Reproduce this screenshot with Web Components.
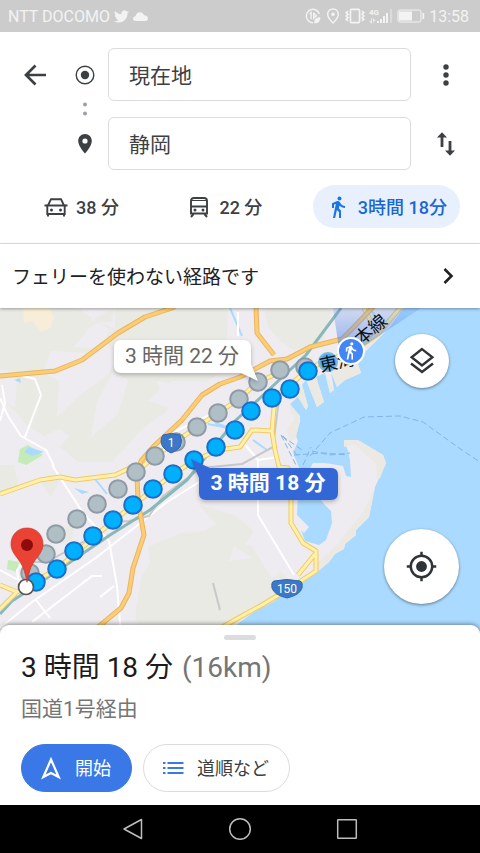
<!DOCTYPE html>
<html lang="ja">
<head>
<meta charset="utf-8">
<meta name="viewport" content="width=device-width, initial-scale=1">
<title>経路</title>
<style>
  body {
    margin: 0;
    font-family: Roboto, "Noto Sans CJK JP", sans-serif;
    color: #3c4043;
    background: #fff;
  }
</style>
</head>
<body>
<route-app></route-app>

<script>
const icons = {
  back: `<path d="M23 12H3M12.500 2.500 3 12l9.500 9.500" fill="none" stroke="currentColor" stroke-width="2.700"/>`,
  origin: `<circle cx="12" cy="12" r="8.800" fill="none" stroke="currentColor" stroke-width="1.400"/><circle cx="12" cy="12" r="4.200"/>`,
  dots: `<circle cx="12" cy="7.500" r="2"/><circle cx="12" cy="16.500" r="2"/>`,
  place: `<path fill-rule="evenodd" d="M12 2C8.100 2 5.200 5.100 5.200 9c0 5.200 6.800 12.500 6.800 12.500S18.800 14.200 18.800 9c0-3.900-2.900-7-6.800-7zm0 4.400a2.600 2.600 0 1 1 0 5.200 2.600 2.600 0 0 1 0-5.200z"/>`,
  more: `<circle cx="12" cy="4" r="2.700"/><circle cx="12" cy="12" r="2.700"/><circle cx="12" cy="20" r="2.700"/>`,
  swap: `<path d="M8 15V4M16 9v11" stroke="currentColor" stroke-width="2.800"/><path d="M3 5.500 8 .300l5 5.200zM11 18.500l5 5.200 5-5.200z"/>`,
  car: `<path d="M2.500 10.500h19M3.300 10.800V19h17.400v-8.200M4.200 10 7 4.200h10L19.800 10M4 19v2.500M20 19v2.500" fill="none" stroke="currentColor" stroke-width="1.900"/><path d="M.500 9.500h3v2h-3zM20.500 9.500h3v2h-3z"/><circle cx="7.500" cy="15" r="1.500"/><circle cx="16.500" cy="15" r="1.500"/>`,
  bus: `<path d="M4 18.500V6c0-2 1.200-3 3-3h10c1.800 0 3 1 3 3v12.500zM4 11.500h16" fill="none" stroke="currentColor" stroke-width="1.900"/><path d="M4 5.500h16" stroke="currentColor"/><path d="m6.500 19-2.500 3M17.500 19l2.500 3" stroke="currentColor" stroke-width="2"/><circle cx="8" cy="15" r="1.500"/><circle cx="16" cy="15" r="1.500"/>`,
  walk: `<path d="M13.500 5.500c1.100 0 2-.9 2-2s-.9-2-2-2-2 .9-2 2 .9 2 2 2zM9.800 8.900 7 23h2.100l1.800-8 2.100 2v6h2v-7.500l-2.100-2 .6-3C14.800 12 16.800 13 19 13v-2c-1.900 0-3.500-1-4.300-2.400l-1-1.600c-.4-.6-1-1-1.700-1-.3 0-.5.1-.8.1L6 8.300V13h2V9.600l1.800-.7z"/>`,
  chevron: `<path d="m8.500 5 7 7-7 7" fill="none" stroke="currentColor" stroke-width="2.600"/>`,
  layers: `<path d="M12 2.500 20.300 9 12 15.500 3.700 9z" fill="none" stroke="currentColor" stroke-width="1.900"/><path d="m3.200 14 8.800 6.800 8.800-6.800" fill="none" stroke="currentColor" stroke-width="2"/>`,
  locate: `<circle cx="12" cy="12" r="8.300" fill="none" stroke="currentColor" stroke-width="1.900"/><circle cx="12" cy="12" r="4.200"/><path d="M12 .600v3M12 20.400v3M.600 12h3M20.400 12h3" stroke="currentColor" stroke-width="1.900"/>`,
  start: `<path d="M12 3.500 4.300 21 12 17l7.700 4z" fill="none" stroke="currentColor" stroke-width="2.200"/>`,
  list: `<path d="M6.500 7H22.500M6.500 12H22.500M6.500 17H22.500M2 7h2.500M2 12h2.500M2 17h2.500" stroke="currentColor" stroke-width="2"/>`,
  navBack: `<path d="M20.500 2.500v19L3 12z" fill="none" stroke="currentColor" stroke-width="1.500" stroke-linejoin="round"/>`,
  navHome: `<circle cx="12" cy="12" r="10.300" fill="none" stroke="currentColor" stroke-width="1.500"/>`,
  navRecent: `<rect x="2.700" y="2.700" width="18.600" height="18.600" rx=".5" fill="none" stroke="currentColor" stroke-width="1.500"/>`,
  bird: `<path d="M23.953 4.570a10 10 0 0 1-2.825.775 4.958 4.958 0 0 0 2.163-2.723c-.951.555-2.005.959-3.127 1.184a4.920 4.920 0 0 0-8.384 4.482C7.690 8.095 4.067 6.130 1.640 3.162a4.822 4.822 0 0 0-.666 2.475c0 1.710.870 3.213 2.188 4.096a4.904 4.904 0 0 1-2.228-.616v.060a4.923 4.923 0 0 0 3.946 4.827 4.996 4.996 0 0 1-2.212.085 4.936 4.936 0 0 0 4.604 3.417 9.867 9.867 0 0 1-6.102 2.105c-.390 0-.779-.023-1.170-.067a13.995 13.995 0 0 0 7.557 2.209c9.053 0 13.998-7.496 13.998-13.985 0-.210 0-.420-.015-.630A9.935 9.935 0 0 0 24 4.590z"/>`,
  cloud: `<path d="M4.500 19C1.500 19 0 17.300 0 15.300c0-2.200 1.700-3.800 4-3.800C5 7.500 7.500 5 11 5c3.200 0 5.500 1.800 6.500 4.800C21.500 9.800 24 12 24 15c0 2.300-1.500 4-4 4z"/>`,
  saver: `<path d="M21.500 9A10 10 0 1 0 12 22" fill="none" stroke="currentColor" stroke-width="2.200"/><path d="m7 8.500 2.200-1.700V17M13 7v10M13 8l4 4-4 3" fill="none" stroke="currentColor" stroke-width="2"/><path d="M14 23c-1-6 3-9 9-9 0 7-4 9.500-9 9z"/>`,
  gps: `<path d="M12 1.500c-4.700 0-8 3.500-8 8 0 5.500 8 13 8 13s8-7.500 8-13c0-4.500-3.300-8-8-8z" fill="none" stroke="currentColor" stroke-width="2.200"/><circle cx="12" cy="9.500" r="2.700"/>`,
  vibrate: `<rect x="6.500" y="4" width="11" height="16" rx="1.500" fill="none" stroke="currentColor" stroke-width="2"/><path d="m3.500 6-2 2 2 2-2 2 2 2-2 2 2 2M20.500 6l2 2-2 2 2 2-2 2 2 2-2 2" fill="none" stroke="currentColor" stroke-width="2"/>`,
};

class UiIcon extends HTMLElement {
  constructor() {
    super();
    this.attachShadow({ mode: "open" });
  }

  connectedCallback() {
    const size = this.getAttribute("size") || 24;
    this.shadowRoot.innerHTML = `
      <style>
        :host {
          display: inline-flex;
          flex: none;
        }
      </style>
      <svg width="${size}" height="${size}" viewBox="0 0 24 24" fill="currentColor" aria-hidden="true">${icons[this.getAttribute("name")]}</svg>
    `;
  }
}

class StatusBar extends HTMLElement {
  constructor() {
    super();
    this.attachShadow({ mode: "open" });
    this.shadowRoot.innerHTML = `
      <style>
        :host {
          display: flex;
          align-items: center;
          justify-content: space-between;
          height: 32px;
          padding: 0 11px 0 8px;
          background: #ccc;
          color: #f3f3f3;
          font-size: 16px;
        }

        div {
          display: flex;
          align-items: center;
          gap: 4px;
        }
      </style>

      <div>
        <span>NTT DOCOMO</span>
        <ui-icon name="bird" size="15"></ui-icon>
        <ui-icon name="cloud" size="15"></ui-icon>
      </div>
      <div>
        <ui-icon name="saver" size="16"></ui-icon>
        <ui-icon name="gps" size="16"></ui-icon>
        <ui-icon name="vibrate" size="20"></ui-icon>
        <svg width="24" height="18" viewBox="0 0 24 18" fill="currentColor">
          <text x="0" y="8" font-size="8" font-weight="700">4G</text>
          <path d="M8 14h2v2H8zM11 12h2v4h-2zM14 9h2v7h-2zM17 6h2v10h-2z"/>
          <path d="M2 11v3H0l3 3v-6zM4 17v-6l3 3H5z" opacity=".8"/>
          <path d="M21 2h2v14h-2z" opacity=".4"/>
        </svg>
        <svg width="28" height="14" viewBox="0 0 28 14" fill="currentColor">
          <rect x="1" y="1" width="23" height="12" rx="2" fill="none" stroke="currentColor"/>
          <path d="M2 2.500h13v9H2zM25.500 4h1.700v6h-1.700z"/>
        </svg>
        <span>13:58</span>
      </div>
    `;
  }
}

class RouteForm extends HTMLElement {
  constructor() {
    super();
    this.attachShadow({ mode: "open" });
    this.shadowRoot.innerHTML = `
      <style>
        :host {
          display: block;
          padding-top: 16px;
          background: #fff;
          border-bottom: 1px solid #e4e5e7;
        }

        form {
          display: grid;
          grid-template-columns: 70px 30px 1fr 69px;
          grid-template-rows: 53px 16px 53px;
          align-items: center;
          justify-items: center;
        }

        input {
          grid-column: 3;
          box-sizing: border-box;
          justify-self: stretch;
          height: 53px;
          min-width: 0;
          margin-left: 8px;
          padding: 0 20px 2px;
          border: 1px solid #dadce0;
          border-radius: 6px;
          background: #fff;
          color: #3c4043;
          font: inherit;
          font-size: 21px;
        }

        button {
          display: flex;
          padding: 0;
          border: 0;
          background: none;
          color: inherit;
          cursor: pointer;
        }

        .mark {
          grid-column: 2;
          display: flex;
        }

        .dots {
          color: #9aa0a6;
        }

        .to {
          grid-row: 3;
        }

        .swap {
          grid-column: 4;
        }

        nav {
          display: flex;
          justify-content: space-between;
          padding: 15px 20px 15px 26px;
        }
      </style>

      <form>
        <button type="button" aria-label="戻る"><ui-icon name="back"></ui-icon></button>
        <label class="mark" for="from" aria-label="出発地"><ui-icon name="origin"></ui-icon></label>
        <input id="from" value="現在地">
        <button type="button" aria-label="メニュー"><ui-icon name="more"></ui-icon></button>
        <span class="mark dots"><ui-icon name="dots"></ui-icon></span>
        <label class="mark to" for="to" aria-label="目的地"><ui-icon name="place"></ui-icon></label>
        <input class="to" id="to" value="静岡">
        <button class="swap to" type="button" aria-label="入れ替え"><ui-icon name="swap"></ui-icon></button>
      </form>

      <nav>
        <mode-tab icon="car">38 分</mode-tab>
        <mode-tab icon="bus">22 分</mode-tab>
        <mode-tab icon="walk" selected>3時間 18分</mode-tab>
      </nav>
    `;
  }
}

class ModeTab extends HTMLElement {
  constructor() {
    super();
    this.attachShadow({ mode: "open" });
  }

  connectedCallback() {
    const selected = this.hasAttribute("selected");
    this.shadowRoot.innerHTML = `
      <style>
        :host {
          display: block;
        }

        button {
          display: flex;
          align-items: center;
          gap: 8px;
          height: 43px;
          padding: 0 18px;
          border: 0;
          border-radius: 22px;
          background: none;
          color: #3c4043;
          font: inherit;
          font-size: 18px;
          font-weight: 500;
          white-space: nowrap;
          cursor: pointer;
        }

        span {
          padding-bottom: 2px;
        }

        :host([selected]) button {
          padding: 0 13px;
          background: #e8f0fe;
          color: #1967d2;
        }

        :host([selected]) ui-icon {
          color: #1a73e8;
        }
      </style>
      <button type="button" aria-pressed="${selected}">
        <ui-icon name="${this.getAttribute("icon")}"></ui-icon>
        <span><slot></slot></span>
      </button>
    `;
  }
}

class RouteNotice extends HTMLElement {
  constructor() {
    super();
    this.attachShadow({ mode: "open" });
    this.shadowRoot.innerHTML = `
      <style>
        :host {
          display: block;
          position: relative;
          z-index: 1;
          background: #fff;
          box-shadow: 0 1px 3px rgba(0, 0, 0, .35);
        }

        a {
          display: flex;
          align-items: center;
          justify-content: space-between;
          height: 64px;
          padding: 0 20px 0 12px;
          color: #202124;
          font-size: 19px;
          text-decoration: none;
        }

        span {
          padding-bottom: 2px;
        }
      </style>
      <a href="#notice"><span><slot></slot></span><ui-icon name="chevron"></ui-icon></a>
    `;
  }
}

const mainRoute = [
  [308, 371], [290, 389], [272, 398], [251, 411], [235, 430], [216, 447], [194, 460], [173, 474],
  [153, 489], [133, 505], [113, 520], [93, 536], [74, 551], [57, 569], [36, 582],
];
const altRoute = [
  [305, 367], [280, 370], [258, 382], [239, 399], [218, 413], [197, 427], [176, 442], [155, 456],
  [136, 472], [118, 489], [97, 504], [77, 519], [56, 534], [46, 554], [30, 573],
];

const drawDots = (points) => points.map(([x, y]) => `<circle cx="${x}" cy="${y}" r="8.800"/>`).join("");

const drawRoad = (d, kind) => `<path class="${kind}-edge" d="${d}"/><path class="${kind}" d="${d}"/>`;

class RouteMap extends HTMLElement {
  constructor() {
    super();
    this.attachShadow({ mode: "open" });
    this.shadowRoot.innerHTML = `
      <style>
        :host {
          display: grid;
          position: relative;
          min-height: 280px;
          background: #aadaff;
          overflow: hidden;
        }

        .map {
          position: absolute;
          width: 100%;
          height: 100%;
        }

        .map path {
          stroke-linejoin: round;
        }

        .land { fill: #eeecf0; }
        .hill { fill: #eaeae5; }
        .water { fill: #aadaff; }
        .sand { fill: #ebe9e2; }
        .white, .grey, .rail, .stream, .ferry,
        .orange, .orange-edge, .yellow, .yellow-edge { fill: none; }
        .white { stroke: #fff; stroke-width: 2; }
        .grey { stroke: #c6c8ca; stroke-width: 2; }
        .rail { stroke: #8ab8b9; stroke-width: 3; }
        .stream { stroke: #aadaff; stroke-width: 2; }
        .ferry { stroke: #82b4e8; stroke-width: 1; stroke-dasharray: 6 3; }
        .orange-edge { stroke: #e9b55c; stroke-width: 5; }
        .orange { stroke: #fbcd78; stroke-width: 3; }
        .yellow-edge { stroke: #f2ca63; stroke-width: 5; }
        .yellow { stroke: #fff0ac; stroke-width: 3; }
        .alt { fill: #b0bec5; stroke: #8e9aa5; stroke-width: 2; }
        .main { fill: #00b0ff; stroke: #1b6fc8; stroke-width: 2; }
        .shield { fill: #3c78c5; stroke: #2c68b5; }
        .shield-text { fill: #fff; font-size: 12px; text-anchor: middle; }
        .place { fill: #111; font-size: 18px; }
        .callout { font-size: 21px; text-anchor: middle; }
        .shadow { filter: drop-shadow(0 2px 2px rgba(0, 0, 0, .25)); }

        .controls {
          position: relative;
          display: flex;
          flex-direction: column;
          align-items: center;
          justify-content: space-between;
          justify-self: end;
          padding: 26px 21px 30px;
        }

        button {
          display: flex;
          align-items: center;
          justify-content: center;
          width: 75px;
          height: 75px;
          padding: 0;
          border: 0;
          border-radius: 50%;
          background: #fff;
          color: #303437;
          box-shadow: 0 1px 3px rgba(0, 0, 0, .45);
          cursor: pointer;
        }

        .small {
          width: 54px;
          height: 54px;
        }
      </style>

      <svg class="map" viewBox="0 308 480 326" preserveAspectRatio="xMidYMin slice">
        <defs>
          <linearGradient id="beam" x1="352" y1="352" x2="352" y2="308" gradientUnits="userSpaceOnUse">
            <stop offset="0" stop-color="#4a7cf0" stop-opacity=".6"/>
            <stop offset="1" stop-color="#5a90f4" stop-opacity=".2"/>
          </linearGradient>
        </defs>

        <path class="land" d="M0 308H403L390 327 376 341 366 351 358 364 361 373 345 380 337 387 331 372 334 390 330 393 325 373 316 377 324 402 317 407 306 380 302 385 308 406 306 410 298 397 290 404 300 416 300 422 296 436 298 441 293 453 299 467 297 515 309 527 304 533 301 530 305 541 319 545 326 540 332 523 331 511 325 505 312 490 309 470 313 463 325 463 343 466 346 476 351 477 350 460 348 451 344 440 358 440 383 455 386 463 375 487 369 517 356 530 356 535 345 544 344 549 335 554 329 562 316 573 300 584 262 605 240 620 228 634H0z"/>
        <path class="sand" d="M403 308 376 341 366 349 358 364 361 373 345 380 337 387 331 372 352 359 372 334 398 308zM325 373l9 17-4 3zM308 383l8-6 8 25-7 5zM302 385l6 21-2 4-8-13zM290 404l10 14-4 19-6 5-3-13 8-10-5-9zM344 440l14 0 25 15 3 8-6 15-3 2-1-17-14-12-8-7-10 3z"/>
        <path class="sand" d="M375 487 369 517 356 530 356 535 345 544 344 549 335 554 329 562 316 573 318 562 336 546 352 526 364 511z"/>

        <path class="hill" d="M0 308h236l4 8-9 16 12 24-36 26-36-1-4 30-25 18-30 33H92L78 462 64 450 48 439 26 424 8 404 0 406z"/>
        <path class="hill" d="M264 308h68l-8 32-30 10-14-9-12-14z"/>
        <path class="hill" d="M198 504l18 20-11 7-25 2-32 14 2 15-9 16-6 39 9 17h80l30-22 21-11 13-22-32-33-11-1 9-14-20-16z"/>
        <path class="land" d="M77 308l34 23 3-23zM115 308v20l-24-8zM102 322h12l-15 27-25-2 16-20zM51 351l35 2 15-12 18 12-11 22-27 19-24 23 2-36-16-9zM113 372l15 8-10 34-27 23 6-35zM156 381l23 4 2 26-33-10 12-12zM46 435l14-6 9 7-10 12 20 17H54zM0 370l18 2-3 35-15-7zM158 418l-6 22 18 9 30-32-12-10zM228 308l38 0-8 36-25 19-6-23zM212 400l30-18 10 80-82 6z"/>
        <path class="hill" d="M0 465h14l4 19-18 10zM38 478l24-2-11 21zM64 529l12-10-4 21-10 4z"/>
        <path class="land" d="M234 546l18 12-23 3zM257 520l18-9 20 46-23 22-23-38z"/>
        <path fill="#f7edd8" d="M23 308h27l4 10-4 10-9 4-8-11-9 2z"/>
        <path fill="#c5ecb8" d="M20 449l8-4 15 10-17 10-8-3zM8 560l11 2-2 10-10-3z"/>
        <path class="water" d="M14 380l6-2 1 5zM24 452l5-5 15 5-12 4zM74 488l15 4-7 2z"/>

        <path class="stream" d="M208 424l25 5M253 440l14 10M215 423l30 10M95 479l12 15M230 308l12 28M370 308l8 13 12 2"/>
        <path class="white" d="M0 398l8 18 13 20 25 14 8 16M25 437l16-42-6-16-12-3M2 385l3 18-5 18M138 466l10-15 30-21 30-14M241 440l17 20 0 55 36 60M52 465l31 48 26 28 8 45 4 50M0 628l32-26 65-45 70-55 45-28M32 622l60-46h10M100 597l14-11M36 600l14 18M0 570l18 10M258 460l20-3M238 312v24M20 590l-3-20 8-10"/>
        <path class="grey" d="M284 387l-6 20-5 40-31 17-41 4-38 28-14 20-20 5-12 1-20 12-50 28H28" />
        <path class="grey" d="M213 583l7 27" />
        <path class="rail" d="M341 308 306 355 260 398 236 420 200 464 187 480 150 510 110 535 60 569 26 592 12 601 0 614"/>

        ${drawRoad("M0 585 17 592 32 583 57 569 113 521 173 474 194 461 218 450 240 447 252 430 272 431 275 450 279 467 288 468 291 480V523L303 543 316 551V571L287 590 262 605 240 617 210 634M315 554 298 575M272 431 274 408 280 393 303 374 320 363 352 352 378 334 400 308M17 592 0 609M0 494 40 480 60 477 75 480 115 475 130 468M136 472 155 456 197 427 218 413 239 399 258 382 283 371M364 308 370 320", "yellow")}
        ${drawRoad("M0 376 55 371 82 360 118 333 145 317 175 307M256 306 257 333 274 355M374 306 353 328 342 339 310 347 287 359 270 361 240 377 220 384 202 395 182 420 155 445 141 461 137 475 138 501 144 535 133 568 129 593 121 608 97 628", "orange")}

        <path class="ferry" d="M310 456l20-23 34-16 36-1 23 6 36 26 21 14M294 455l30-2 24 2M312 451l18 4 20-2M281 435l15 30M283 436l16 22M282 436l20 14M303 465l8-18"/>

        <path fill="url(#beam)" d="M333 308h88l-68 45-14-4z"/>
        <circle cx="328" cy="362" r="9" fill="#4aa8ec" stroke="#7ab8e0" stroke-width="2"/>
        <g class="alt">${drawDots(altRoute)}</g>
        <g class="main">${drawDots(mainRoute)}</g>
        <text class="place" transform="translate(321 372) rotate(-12)">東海</text>
        <text class="place" transform="translate(361 346) rotate(-40)">本線</text>

        <circle cx="351" cy="351" r="13" fill="#4285f4" stroke="#fff" stroke-width="2"/>
        <g fill="#fff" transform="translate(341 341) scale(.8)">${icons.walk}</g>

        <path class="shield" d="M163 435q8-3 17 0 3 6 0 12-3 4-9 6-5-2-8-6-4-6 0-12z"/>
        <text class="shield-text" x="171" y="447">1</text>
        <path class="shield" d="M274 581q13-3 26 0 3 1 2 7-2 7-15 10-13-3-15-10-1-6 2-7z"/>
        <text class="shield-text" x="287" y="593">150</text>

        <g class="shadow">
          <path fill="#fff" d="M121 340H243Q251 340 251 348V364L258 381 241 373H121Q114 373 114 366V348Q114 340 121 340z"/>
        </g>
        <text class="callout" x="182" y="363" fill="#666">3 時間 22 分</text>
        <g class="shadow" fill="#3367d6">
          <path d="M206 468H331Q338 468 338 475V493Q338 500 331 500H206Q199 500 199 493V477L191 459z"/>
          <path d="M191 459 214 470 200 480z"/>
        </g>
        <text class="callout" x="268" y="490" fill="#fff" font-weight="700">3 時間 18 分</text>

        <circle cx="26" cy="587" r="7.500" fill="#fff" stroke="#555" stroke-width="1.700"/>
        <path fill="#ea4335" stroke="#c5362c" stroke-width=".7" d="M27 528c-9.500 0-16 7-16 16.300 0 9 8 13.700 12 23 2 5 3 10 4 15 1-5 2-10 4-15 4-9.300 12-14 12-23C43 535 36.500 528 27 528z"/>
        <circle cx="27" cy="545" r="6" fill="#8c0b0b"/>
      </svg>

      <div class="controls">
        <button class="small" type="button" aria-label="レイヤ"><ui-icon name="layers" size="30"></ui-icon></button>
        <button type="button" aria-label="現在地を表示"><ui-icon name="locate" size="31"></ui-icon></button>
      </div>
    `;
  }
}

class RouteSheet extends HTMLElement {
  constructor() {
    super();
    this.attachShadow({ mode: "open" });
    this.shadowRoot.innerHTML = `
      <style>
        :host {
          display: block;
          position: relative;
          margin-top: -9px;
          padding: 10px 21px 13px;
          border-radius: 9px 9px 0 0;
          background: #fff;
          box-shadow: 0 -1px 4px rgba(0, 0, 0, .4);
        }

        .handle {
          width: 32px;
          height: 5px;
          margin: 0 auto;
          border-radius: 3px;
          background: #dadce0;
        }

        h1 {
          margin: 8px 0 0;
          color: #1b1b1b;
          font-size: 28px;
          font-weight: 400;
          line-height: 40px;
        }

        h1 span {
          margin-left: 2px;
        }

        h1 span,
        p {
          color: #757575;
        }

        p {
          margin: 4px 0 18px;
          font-size: 21px;
          line-height: 34px;
        }

        .actions {
          display: flex;
          gap: 11px;
        }

        button {
          display: flex;
          align-items: center;
          gap: 12px;
          height: 48px;
          padding: 0 20px 0 17px;
          border: 1px solid #dadce0;
          border-radius: 24px;
          background: #fff;
          color: #3c4043;
          font: inherit;
          font-size: 18px;
          cursor: pointer;
        }

        button span {
          padding-bottom: 2px;
        }

        button ui-icon {
          color: #3b78e7;
        }

        .primary,
        .primary ui-icon {
          border-color: #3b78e7;
          background: #3b78e7;
          color: #fff;
        }
      </style>

      <div class="handle"></div>
      <h1>3 時間 18 分 <span>(16km)</span></h1>
      <p>国道1号経由</p>
      <div class="actions">
        <button class="primary" type="button"><ui-icon name="start"></ui-icon><span>開始</span></button>
        <button type="button"><ui-icon name="list"></ui-icon><span>道順など</span></button>
      </div>
    `;
  }
}

class NavBar extends HTMLElement {
  constructor() {
    super();
    this.attachShadow({ mode: "open" });
    this.shadowRoot.innerHTML = `
      <style>
        :host {
          display: flex;
          align-items: center;
          justify-content: center;
          gap: 83px;
          height: 48px;
          background: #000;
          color: #bdbdbd;
        }

        button {
          display: flex;
          padding: 0;
          border: 0;
          background: none;
          color: inherit;
        }
      </style>

      <button type="button" aria-label="戻る"><ui-icon name="navBack"></ui-icon></button>
      <button type="button" aria-label="ホーム"><ui-icon name="navHome"></ui-icon></button>
      <button type="button" aria-label="履歴"><ui-icon name="navRecent"></ui-icon></button>
    `;
  }
}

class RouteApp extends HTMLElement {
  constructor() {
    super();
    this.attachShadow({ mode: "open" });
    this.shadowRoot.innerHTML = `
      <style>
        :host {
          display: flex;
          flex-direction: column;
          min-height: 100vh;
        }

        route-map {
          flex: 1;
        }
      </style>

      <status-bar></status-bar>
      <route-form></route-form>
      <route-notice>フェリーを使わない経路です</route-notice>
      <route-map></route-map>
      <route-sheet></route-sheet>
      <nav-bar></nav-bar>
    `;
  }
}

customElements.define("ui-icon", UiIcon);
customElements.define("status-bar", StatusBar);
customElements.define("mode-tab", ModeTab);
customElements.define("route-form", RouteForm);
customElements.define("route-notice", RouteNotice);
customElements.define("route-map", RouteMap);
customElements.define("route-sheet", RouteSheet);
customElements.define("nav-bar", NavBar);
customElements.define("route-app", RouteApp);
</script>
</body>
</html>
